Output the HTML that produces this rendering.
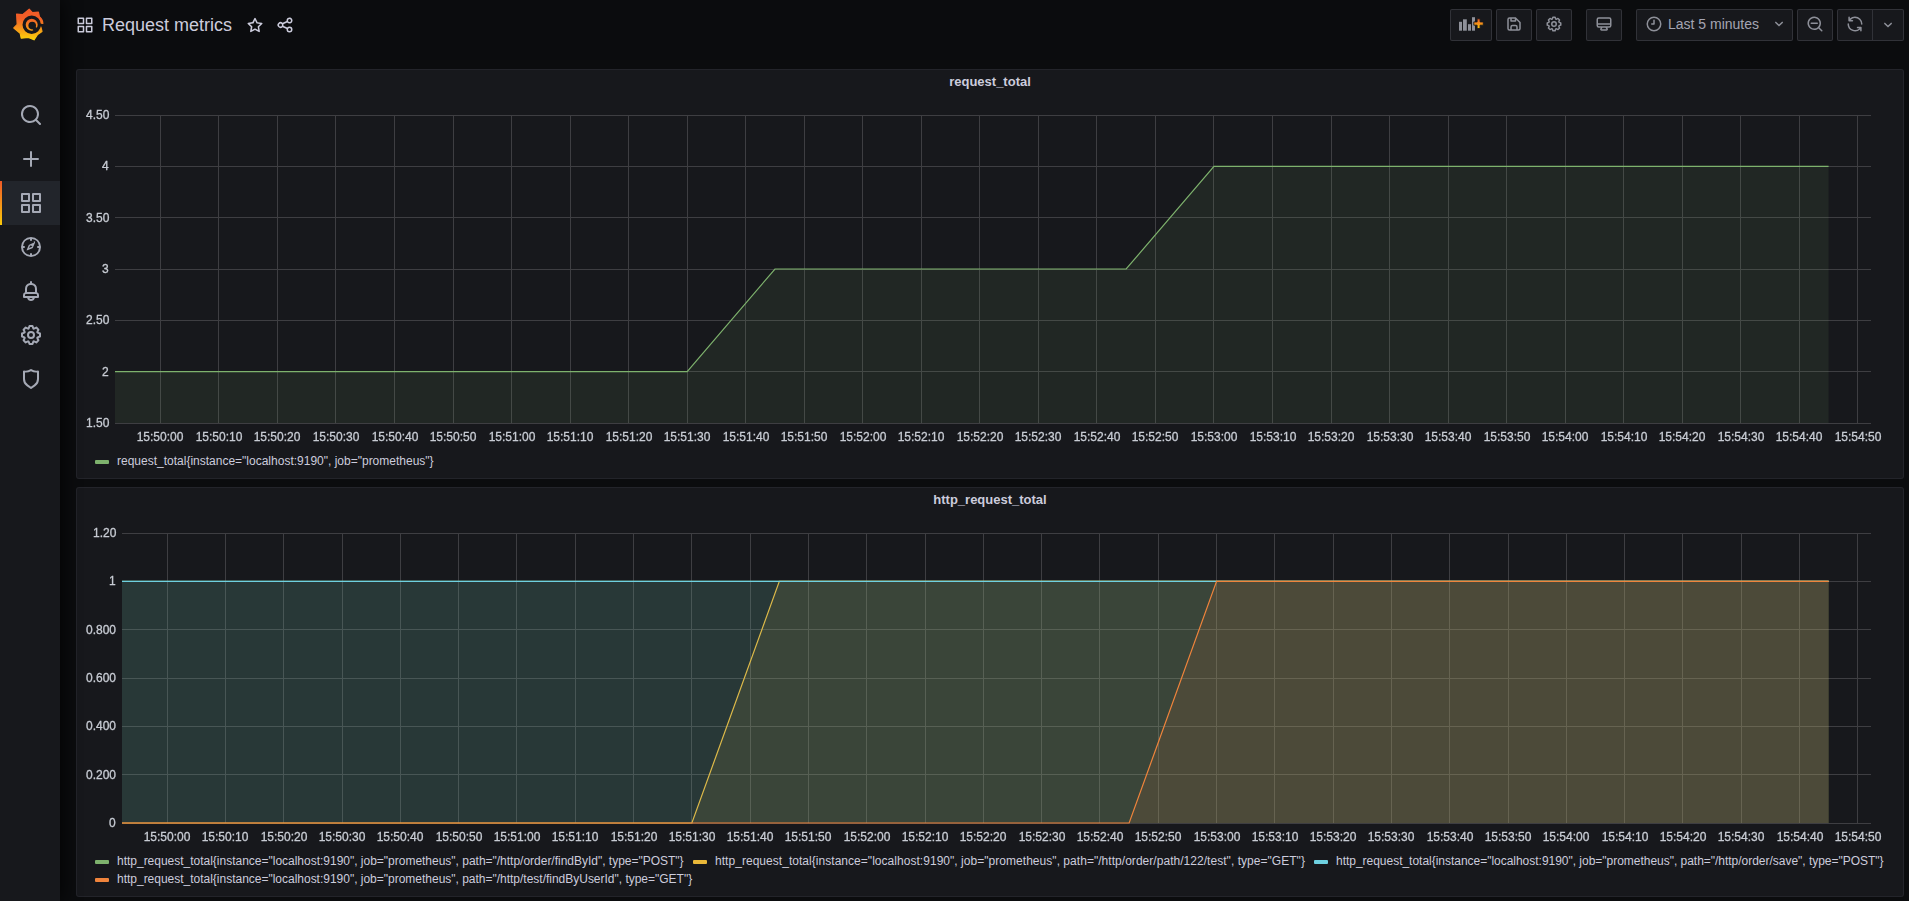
<!DOCTYPE html>
<html><head><meta charset="utf-8"><title>Request metrics - Grafana</title>
<style>
*{box-sizing:border-box;margin:0;padding:0}
html,body{width:1909px;height:901px;overflow:hidden;background:#0b0c0e;font-family:"Liberation Sans", sans-serif;color:#ccccdc}
.side{position:absolute;left:0;top:0;width:60px;height:901px;background:#17181c;box-shadow:0 0 20px rgba(0,0,0,0.9);z-index:5}
.active{position:absolute;left:0;top:181px;width:60px;height:44px;background:#22252b}
.abar{position:absolute;left:0;top:181px;width:2px;height:44px;background:linear-gradient(#f05a28,#fbca0a)}
.panel{position:absolute;left:76px;width:1828px;background:#17181c;border:1px solid rgba(204,204,220,0.07);border-radius:3px}
.yl{position:absolute;font-size:12px;line-height:14px;color:#c8ccd4;-webkit-text-stroke:0.3px #c8ccd4;will-change:transform;text-align:right;white-space:nowrap}
.xl{position:absolute;width:60px;text-align:center;font-size:12px;line-height:14px;color:#c8ccd4;-webkit-text-stroke:0.3px #c8ccd4;will-change:transform;white-space:nowrap}
.ptitle{position:absolute;left:76px;width:1828px;text-align:center;font-size:13px;font-weight:bold;line-height:16px;color:#ccccdc}
.sw{position:absolute;width:14px;height:4px;border-radius:1px}
.lt{position:absolute;font-size:12px;line-height:14px;color:#ccccdc;white-space:nowrap}
.btn{position:absolute;top:9px;height:32px;background:#17181c;border:1px solid rgba(204,204,220,0.15);border-radius:2px}
</style></head><body>
<div class="side">
<svg style="position:absolute;left:10px;top:6px" width="36" height="36" viewBox="0 0 36 36">
<defs><linearGradient id="lg" x1="0" y1="0" x2="0" y2="1"><stop offset="0" stop-color="#f05a28"/><stop offset="0.3" stop-color="#f25f27"/><stop offset="1" stop-color="#fbd20a"/></linearGradient></defs>
<path d="M19.2 3.2 L22.4 6.6 L28.4 6.2 L29.4 10.6 Q33 13.5 32.8 17.6 L30.4 19.2 L32 25.4 L27.6 28.4 L24 33.8 L18.4 31.4 L11.2 32.2 L10.2 27.4 L3.8 22 L7.2 18.4 L6.6 8.2 L12.6 8.6 Z" fill="url(#lg)" stroke="url(#lg)" stroke-width="1.2" stroke-linejoin="round"/>
<circle cx="21.7" cy="18.8" r="7.6" fill="none" stroke="#17181c" stroke-width="3.2"/>
<path d="M28.6 17.2 L33.8 18.2 L33.6 20.4 L28.4 20.6 Z" fill="#17181c"/>
<circle cx="22.2" cy="19.6" r="3.8" fill="#17181c"/>
<path d="M22.2 19.6 L28.4 22.4 L23.6 26.2 Z" fill="#17181c"/>
</svg>
<div class="active"></div><div class="abar"></div>
<svg style="position:absolute;left:19px;top:103px" width="24" height="24" viewBox="0 0 24 24"><path d="M21.71,20.29,18,16.61A9,9,0,1,0,16.61,18l3.68,3.68a1,1,0,0,0,1.42,0A1,1,0,0,0,21.71,20.29ZM11,18a7,7,0,1,1,7-7A7,7,0,0,1,11,18Z" fill="#a5a9b5"/></svg><svg style="position:absolute;left:19px;top:147px" width="24" height="24" viewBox="0 0 24 24"><path d="M19,11H13V5a1,1,0,0,0-2,0v6H5a1,1,0,0,0,0,2h6v6a1,1,0,0,0,2,0V13h6a1,1,0,0,0,0-2Z" fill="#a5a9b5"/></svg><svg style="position:absolute;left:19px;top:191px" width="24" height="24" viewBox="0 0 24 24"><path d="M10,13H3a1,1,0,0,0-1,1v7a1,1,0,0,0,1,1h7a1,1,0,0,0,1-1V14A1,1,0,0,0,10,13ZM9,20H4V15H9ZM21,2H14a1,1,0,0,0-1,1v7a1,1,0,0,0,1,1h7a1,1,0,0,0,1-1V3A1,1,0,0,0,21,2ZM20,9H15V4h5Zm1,4H14a1,1,0,0,0-1,1v7a1,1,0,0,0,1,1h7a1,1,0,0,0,1-1V14A1,1,0,0,0,21,13Zm-1,7H15V15h5ZM10,2H3A1,1,0,0,0,2,3v7a1,1,0,0,0,1,1h7a1,1,0,0,0,1-1V3A1,1,0,0,0,10,2ZM9,9H4V4H9Z" fill="#a5a9b5"/></svg><svg style="position:absolute;left:19px;top:235px" width="24" height="24" viewBox="0 0 24 24"><path d="M12,2A10,10,0,1,0,22,12,10,10,0,0,0,12,2Zm1,17.93V19a1,1,0,0,0-2,0v.93A8,8,0,0,1,4.07,13H5a1,1,0,0,0,0-2H4.07A8,8,0,0,1,11,4.07V5a1,1,0,0,0,2,0V4.07A8,8,0,0,1,19.93,11H19a1,1,0,0,0,0,2h.93A8,8,0,0,1,13,19.93ZM15.14,7.55l-5,2.12a1,1,0,0,0-.47.47l-2.12,5A1,1,0,0,0,7.55,15a1,1,0,0,0,.3.2,1,1,0,0,0,.55.05l5-2.12a1,1,0,0,0,.47-.47l2.12-5a1,1,0,0,0-1.3-1.3ZM12.55,12,10.07,13l1-2.48L13.45,11Z" fill="#a5a9b5"/></svg><svg style="position:absolute;left:19px;top:279px" width="24" height="24" viewBox="0 0 24 24"><path d="M18,13.18V10a6,6,0,0,0-5-5.91V3a1,1,0,0,0-2,0V4.09A6,6,0,0,0,6,10v3.18A3,3,0,0,0,4,16v2a1,1,0,0,0,1,1H8.14a4,4,0,0,0,7.72,0H19a1,1,0,0,0,1-1V16A3,3,0,0,0,18,13.18ZM8,10a4,4,0,0,1,8,0v3H8ZM12,20a2,2,0,0,1-1.72-1h3.44A2,2,0,0,1,12,20Zm6-3H6V16a1,1,0,0,1,1-1H17a1,1,0,0,1,1,1Z" fill="#a5a9b5"/></svg><svg style="position:absolute;left:19px;top:323px" width="24" height="24" viewBox="0 0 24 24"><path d="M21.32,9.55l-1.89-.63.89-1.78A1,1,0,0,0,20.130,6L18,3.87a1,1,0,0,0-1.15-.19l-1.78.89-.63-1.89A1,1,0,0,0,13.5,2h-3a1,1,0,0,0-.95.68L8.92,4.57,7.14,3.68A1,1,0,0,0,6,3.870L3.87,6a1,1,0,0,0-.19,1.15l.89,1.78-1.89.63A1,1,0,0,0,2,10.5v3a1,1,0,0,0,.68.95l1.89.63-.89,1.78A1,1,0,0,0,3.87,18L6,20.13a1,1,0,0,0,1.15.19l1.78-.89.63,1.89a1,1,0,0,0,.95.68h3a1,1,0,0,0,.95-.68l.63-1.89,1.78.89A1,1,0,0,0,18,20.13L20.13,18a1,1,0,0,0,.19-1.15l-.89-1.78,1.89-.63A1,1,0,0,0,22,13.5v-3A1,1,0,0,0,21.32,9.55ZM20,12.78l-1.2.4A2,2,0,0,0,17.64,16l.57,1.14-1.1,1.1L16,17.64a2,2,0,0,0-2.79,1.16L12.78,20H11.22l-.4-1.2A2,2,0,0,0,8,17.64l-1.14.57-1.1-1.1L6.36,16A2,2,0,0,0,5.2,13.18L4,12.78V11.22l1.2-.4A2,2,0,0,0,6.36,8L5.79,6.89l1.1-1.1L8,6.36A2,2,0,0,0,10.82,5.2L11.22,4h1.56l.4,1.2A2,2,0,0,0,16,6.36l1.14-.57,1.1,1.1L17.64,8a2,2,0,0,0,1.16,2.79l1.2.4ZM12,8a4,4,0,1,0,4,4A4,4,0,0,0,12,8Zm0,6a2,2,0,1,1,2-2A2,2,0,0,1,12,14Z" fill="#a5a9b5"/></svg><svg style="position:absolute;left:19px;top:367px" width="24" height="24" viewBox="0 0 24 24"><path d="M19.63,3.65a1,1,0,0,0-.84-.2,8,8,0,0,1-6.22-1.27,1,1,0,0,0-1.14,0A8,8,0,0,1,5.21,3.45a1,1,0,0,0-.84.2A1,1,0,0,0,4,4.43v7.45a9,9,0,0,0,3.77,7.33l3.65,2.6a1,1,0,0,0,1.16,0l3.650-2.6A9,9,0,0,0,20,11.88V4.43A1,1,0,0,0,19.63,3.65ZM18,11.88a7,7,0,0,1-2.93,5.7L12,19.77,8.930,17.58A7,7,0,0,1,6,11.88V5.58a10,10,0,0,0,6-1.39,10,10,0,0,0,6,1.39Z" fill="#a5a9b5"/></svg>
</div>
<svg style="position:absolute;left:75.5px;top:16px" width="18" height="18" viewBox="0 0 24 24"><path d="M10,13H3a1,1,0,0,0-1,1v7a1,1,0,0,0,1,1h7a1,1,0,0,0,1-1V14A1,1,0,0,0,10,13ZM9,20H4V15H9ZM21,2H14a1,1,0,0,0-1,1v7a1,1,0,0,0,1,1h7a1,1,0,0,0,1-1V3A1,1,0,0,0,21,2ZM20,9H15V4h5Zm1,4H14a1,1,0,0,0-1,1v7a1,1,0,0,0,1,1h7a1,1,0,0,0,1-1V14A1,1,0,0,0,21,13Zm-1,7H15V15h5ZM10,2H3A1,1,0,0,0,2,3v7a1,1,0,0,0,1,1h7a1,1,0,0,0,1-1V3A1,1,0,0,0,10,2ZM9,9H4V4H9Z" fill="#ccccdc"/></svg><div style="position:absolute;left:102px;top:15px;font-size:18px;line-height:21px;color:#ccccdc;white-space:nowrap">Request metrics</div><svg style="position:absolute;left:246px;top:16px" width="18" height="18" viewBox="0 0 24 24"><path d="M22,9.67A1,1,0,0,0,21.14,9l-5.69-.83L12.9,3a1,1,0,0,0-1.8,0L8.55,8.16,2.86,9a1,1,0,0,0-.81.68,1,1,0,0,0,.25,1l4.13,4-1,5.68A1,1,0,0,0,6.9,21.440L12,18.77l5.1,2.67a.93.93,0,0,0,.46.12,1,1,0,0,0,.59-.19,1,1,0,0,0,.4-1l-1-5.68,4.13-4A1,1,0,0,0,22,9.67Zm-6.15,4a1,1,0,0,0-.29.88l.72,4.2-3.76-2a1.06,1.06,0,0,0-.94,0l-3.76,2,.72-4.2a1,1,0,0,0-.29-.88l-3-3,4.21-.61a1,1,0,0,0,.76-.55L12,5.7l1.88,3.82a1,1,0,0,0,.76.55l4.21.61Z" fill="#ccccdc"/></svg><svg style="position:absolute;left:275.5px;top:15.5px" width="18" height="18" viewBox="0 0 24 24"><path d="M18,14a4,4,0,0,0-3.08,1.48l-5.1-2.35a3.64,3.64,0,0,0,0-2.26l5.1-2.35A4,4,0,1,0,14,6a4.17,4.17,0,0,0,.07.71L8.79,9.14a4,4,0,1,0,0,5.72l5.28,2.43A4.170,4.170,0,0,0,14,18a4,4,0,1,0,4-4ZM18,4a2,2,0,1,1-2,2A2,2,0,0,1,18,4ZM6,14a2,2,0,1,1,2-2A2,2,0,0,1,6,14Zm12,6a2,2,0,1,1,2-2A2,2,0,0,1,18,20Z" fill="#ccccdc"/></svg>
<div class="btn" style="left:1450px;width:42px"></div><svg style="position:absolute;left:1458px;top:16px" width="26" height="16" viewBox="0 0 26 16"><g fill="#8e9099"><rect x="1" y="5.8" width="3" height="8.9"/><rect x="5" y="3.3" width="3.8" height="11.4"/><rect x="10" y="8.2" width="3" height="6.5"/><rect x="14" y="1.2" width="3" height="13.5"/></g><defs><linearGradient id="pg" x1="0" y1="0" x2="0" y2="1"><stop offset="0" stop-color="#f05a28"/><stop offset="1" stop-color="#fbca0a"/></linearGradient></defs><path d="M19.1 2.8 h3 v3.1 h3.2 v3.3 h-3.2 v3.4 h-3 v-3.4 h-3.3 v-3.3 h3.3 z" fill="url(#pg)" stroke="#17181c" stroke-width="0.9"/></svg><div class="btn" style="left:1496px;width:36px"></div><svg style="position:absolute;left:1504.75px;top:14.75px" width="18" height="18" viewBox="0 0 24 24"><path d="M20.71,9.29l-6-6a1,1,0,0,0-.32-.21A1.09,1.09,0,0,0,14,3H6A3,3,0,0,0,3,6V18a3,3,0,0,0,3,3H18a3,3,0,0,0,3-3V10A1,1,0,0,0,20.71,9.29ZM9,5h4V7H9Zm6,14H9V16a1,1,0,0,1,1-1h4a1,1,0,0,1,1,1Zm4-1a1,1,0,0,1-1,1H17V16a3,3,0,0,0-3-3H10a3,3,0,0,0-3,3v3H6a1,1,0,0,1-1-1V6A1,1,0,0,1,6,5H7V8A1,1,0,0,0,8,9h6a1,1,0,0,0,1-1V6.41l4,4Z" fill="#8e9099"/></svg><div class="btn" style="left:1536px;width:36px"></div><svg style="position:absolute;left:1545px;top:15px" width="18" height="18" viewBox="0 0 24 24"><path d="M21.32,9.55l-1.89-.63.89-1.78A1,1,0,0,0,20.130,6L18,3.87a1,1,0,0,0-1.15-.19l-1.78.89-.63-1.89A1,1,0,0,0,13.5,2h-3a1,1,0,0,0-.95.68L8.92,4.57,7.14,3.68A1,1,0,0,0,6,3.870L3.87,6a1,1,0,0,0-.19,1.15l.89,1.78-1.89.63A1,1,0,0,0,2,10.5v3a1,1,0,0,0,.68.95l1.89.63-.89,1.78A1,1,0,0,0,3.87,18L6,20.13a1,1,0,0,0,1.15.19l1.78-.89.63,1.89a1,1,0,0,0,.95.68h3a1,1,0,0,0,.95-.68l.63-1.89,1.78.89A1,1,0,0,0,18,20.13L20.13,18a1,1,0,0,0,.19-1.15l-.89-1.78,1.89-.63A1,1,0,0,0,22,13.5v-3A1,1,0,0,0,21.32,9.55ZM20,12.78l-1.2.4A2,2,0,0,0,17.64,16l.57,1.14-1.1,1.1L16,17.64a2,2,0,0,0-2.79,1.16L12.78,20H11.22l-.4-1.2A2,2,0,0,0,8,17.64l-1.14.57-1.1-1.1L6.36,16A2,2,0,0,0,5.2,13.18L4,12.78V11.22l1.2-.4A2,2,0,0,0,6.36,8L5.79,6.89l1.1-1.1L8,6.36A2,2,0,0,0,10.82,5.2L11.22,4h1.56l.4,1.2A2,2,0,0,0,16,6.36l1.14-.57,1.1,1.1L17.64,8a2,2,0,0,0,1.16,2.79l1.2.4ZM12,8a4,4,0,1,0,4,4A4,4,0,0,0,12,8Zm0,6a2,2,0,1,1,2-2A2,2,0,0,1,12,14Z" fill="#8e9099"/></svg><div class="btn" style="left:1586px;width:36px"></div><svg style="position:absolute;left:1595px;top:15px" width="18" height="18" viewBox="0 0 24 24"><path d="M19,3H5A3,3,0,0,0,2,6v8a3,3,0,0,0,3,3H7.64l-.58,1a2,2,0,0,0,0,2,2,2,0,0,0,1.75,1h6.46A2,2,0,0,0,17,20a2,2,0,0,0,0-2l-.59-1H19a3,3,0,0,0,3-3V6A3,3,0,0,0,19,3ZM8.77,19,10,17H14l1.2,2ZM20,14a1,1,0,0,1-1,1H5a1,1,0,0,1-1-1V13H20Zm0-3H4V6A1,1,0,0,1,5,5H19a1,1,0,0,1,1,1Z" fill="#8e9099"/></svg><div class="btn" style="left:1636px;width:157px"></div><svg style="position:absolute;left:1644.75px;top:15px" width="18" height="18" viewBox="0 0 24 24"><path d="M12,2A10,10,0,1,0,22,12,10,10,0,0,0,12,2Zm0,18a8,8,0,1,1,8-8A8,8,0,0,1,12,20Zm0-14a1,1,0,0,0-1,1v4H9a1,1,0,0,0,0,2h3a1,1,0,0,0,1-1V7A1,1,0,0,0,12,6Z" fill="#8e9099"/></svg><div style="position:absolute;left:1668px;top:16px;font-size:14px;line-height:17px;color:#ccccdc;opacity:0.78;white-space:nowrap">Last 5 minutes</div><svg style="position:absolute;left:1770px;top:15px" width="18" height="18" viewBox="0 0 24 24"><path d="M17,9.17a1,1,0,0,0-1.41,0L12,12.71,8.46,9.17a1,1,0,0,0-1.41,0,1,1,0,0,0,0,1.42l4.24,4.24a1,1,0,0,0,1.42,0L17,10.59A1,1,0,0,0,17,9.17Z" fill="#8e9099"/></svg><div class="btn" style="left:1797px;width:36px"></div><svg style="position:absolute;left:1806px;top:15px" width="18" height="18" viewBox="0 0 24 24"><path d="M21.71,20.29,18,16.61A9,9,0,1,0,16.61,18l3.68,3.68a1,1,0,0,0,1.42,0A1,1,0,0,0,21.71,20.29ZM11,18a7,7,0,1,1,7-7A7,7,0,0,1,11,18Zm4-8H7a1,1,0,0,0,0,2h8a1,1,0,0,0,0-2Z" fill="#8e9099"/></svg><div class="btn" style="left:1837px;width:67px"></div><div style="position:absolute;left:1872px;top:10px;width:1px;height:30px;background:rgba(204,204,220,0.15)"></div><svg style="position:absolute;left:1846px;top:15px" width="18" height="18" viewBox="0 0 24 24"><path d="M19.91,15.51H15.38a1,1,0,0,0,0,2h2.4A8,8,0,0,1,4,12a1,1,0,0,0-2,0,10,10,0,0,0,16.88,7.23V21a1,1,0,0,0,2,0V16.5A1,1,0,0,0,19.91,15.51ZM12,2A10,10,0,0,0,5.12,4.770V3a1,1,0,0,0-2,0V7.5a1,1,0,0,0,1,1h4.5a1,1,0,0,0,0-2H6.22A8,8,0,0,1,20,12a1,1,0,0,0,2,0A10,10,0,0,0,12,2Z" fill="#8e9099"/></svg><svg style="position:absolute;left:1879px;top:15.5px" width="18" height="18" viewBox="0 0 24 24"><path d="M17,9.17a1,1,0,0,0-1.41,0L12,12.71,8.46,9.17a1,1,0,0,0-1.41,0,1,1,0,0,0,0,1.42l4.24,4.24a1,1,0,0,0,1.42,0L17,10.59A1,1,0,0,0,17,9.17Z" fill="#8e9099"/></svg>
<div class="panel" style="top:69px;height:410px"></div>
<div class="panel" style="top:487px;height:410px"></div>
<svg style="position:absolute;left:0;top:0" width="1909" height="901">
<defs><clipPath id="c69"><rect x="115" y="114" width="1756" height="310"/></clipPath></defs>
<path d="M115 115.5 H1871 M115 166.5 H1871 M115 217.5 H1871 M115 269.5 H1871 M115 320.5 H1871 M115 371.5 H1871 M115 423.5 H1871 M160.5 115 V423 M218.5 115 V423 M277.5 115 V423 M335.5 115 V423 M394.5 115 V423 M453.5 115 V423 M511.5 115 V423 M570.5 115 V423 M628.5 115 V423 M687.5 115 V423 M745.5 115 V423 M804.5 115 V423 M862.5 115 V423 M921.5 115 V423 M979.5 115 V423 M1038.5 115 V423 M1096.5 115 V423 M1155.5 115 V423 M1213.5 115 V423 M1272.5 115 V423 M1331.5 115 V423 M1389.5 115 V423 M1448.5 115 V423 M1506.5 115 V423 M1565.5 115 V423 M1623.5 115 V423 M1682.5 115 V423 M1740.5 115 V423 M1799.5 115 V423 M1857.5 115 V423" stroke="rgba(255,255,255,0.17)" stroke-width="1" fill="none" shape-rendering="crispEdges"/>
<g clip-path="url(#c69)">
<path d="M72.56 423 L72.56 371.67 L160.36 371.67 L248.16 371.67 L335.96 371.67 L423.76 371.67 L511.56 371.67 L599.36 371.67 L687.16 371.67 L774.96 269 L862.76 269 L950.56 269 L1038.36 269 L1126.16 269 L1213.96 166.33 L1301.76 166.33 L1389.56 166.33 L1477.36 166.33 L1565.16 166.33 L1652.96 166.33 L1740.76 166.33 L1828.56 166.33 L1828.56 423 Z" fill="#7EB26D" fill-opacity="0.1" stroke="none"/>
<path d="M72.56 371.67 L160.36 371.67 L248.16 371.67 L335.96 371.67 L423.76 371.67 L511.56 371.67 L599.36 371.67 L687.16 371.67 L774.96 269 L862.76 269 L950.56 269 L1038.36 269 L1126.16 269 L1213.96 166.33 L1301.76 166.33 L1389.56 166.33 L1477.36 166.33 L1565.16 166.33 L1652.96 166.33 L1740.76 166.33 L1828.56 166.33" fill="none" stroke="#7EB26D" stroke-width="1.2"/>
</g></svg>
<div class="ptitle" style="top:74px">request_total</div>
<div class="sw" style="left:95px;top:460px;background:#7EB26D"></div>
<div class="lt" style="left:117px;top:454px;letter-spacing:0px">request_total{instance="localhost:9190", job="prometheus"}</div>
<svg style="position:absolute;left:0;top:0" width="1909" height="901">
<defs><clipPath id="c487"><rect x="122" y="532" width="1749" height="292"/></clipPath></defs>
<path d="M122 533.5 H1871 M122 581.5 H1871 M122 629.5 H1871 M122 678.5 H1871 M122 726.5 H1871 M122 774.5 H1871 M122 823.5 H1871 M167.5 533 V823 M225.5 533 V823 M283.5 533 V823 M342.5 533 V823 M400.5 533 V823 M458.5 533 V823 M516.5 533 V823 M575.5 533 V823 M633.5 533 V823 M691.5 533 V823 M750.5 533 V823 M808.5 533 V823 M866.5 533 V823 M925.5 533 V823 M983.5 533 V823 M1041.5 533 V823 M1099.5 533 V823 M1158.5 533 V823 M1216.5 533 V823 M1274.5 533 V823 M1333.5 533 V823 M1391.5 533 V823 M1449.5 533 V823 M1508.5 533 V823 M1566.5 533 V823 M1624.5 533 V823 M1682.5 533 V823 M1741.5 533 V823 M1799.5 533 V823 M1857.5 533 V823" stroke="rgba(255,255,255,0.17)" stroke-width="1" fill="none" shape-rendering="crispEdges"/>
<g clip-path="url(#c487)">
<path d="M79.73 823 L79.73 581.33 L167.18 581.33 L254.63 581.33 L342.08 581.33 L429.53 581.33 L516.98 581.33 L604.43 581.33 L691.88 581.33 L779.33 581.33 L866.78 581.33 L954.23 581.33 L1041.68 581.33 L1129.13 581.33 L1216.58 581.33 L1304.03 581.33 L1391.48 581.33 L1478.93 581.33 L1566.38 581.33 L1653.83 581.33 L1741.28 581.33 L1828.73 581.33 L1828.73 823 Z" fill="#7EB26D" fill-opacity="0.1" stroke="none"/>
<path d="M79.73 581.33 L167.18 581.33 L254.63 581.33 L342.08 581.33 L429.53 581.33 L516.98 581.33 L604.43 581.33 L691.88 581.33 L779.33 581.33 L866.78 581.33 L954.23 581.33 L1041.68 581.33 L1129.13 581.33 L1216.58 581.33 L1304.03 581.33 L1391.48 581.33 L1478.93 581.33 L1566.38 581.33 L1653.83 581.33 L1741.28 581.33 L1828.73 581.33" fill="none" stroke="#7EB26D" stroke-width="1.2"/>
<path d="M79.73 823 L79.73 823 L167.18 823 L254.63 823 L342.08 823 L429.53 823 L516.98 823 L604.43 823 L691.88 823 L779.33 581.33 L866.78 581.33 L954.23 581.33 L1041.68 581.33 L1129.13 581.33 L1216.58 581.33 L1304.03 581.33 L1391.48 581.33 L1478.93 581.33 L1566.38 581.33 L1653.83 581.33 L1741.28 581.33 L1828.73 581.33 L1828.73 823 Z" fill="#EAB839" fill-opacity="0.1" stroke="none"/>
<path d="M79.73 823 L167.18 823 L254.63 823 L342.08 823 L429.53 823 L516.98 823 L604.43 823 L691.88 823 L779.33 581.33 L866.78 581.33 L954.23 581.33 L1041.68 581.33 L1129.13 581.33 L1216.58 581.33 L1304.03 581.33 L1391.48 581.33 L1478.93 581.33 L1566.38 581.33 L1653.83 581.33 L1741.28 581.33 L1828.73 581.33" fill="none" stroke="#EAB839" stroke-width="1.2"/>
<path d="M79.73 823 L79.73 581.33 L167.18 581.33 L254.63 581.33 L342.08 581.33 L429.53 581.33 L516.98 581.33 L604.43 581.33 L691.88 581.33 L779.33 581.33 L866.78 581.33 L954.23 581.33 L1041.68 581.33 L1129.13 581.33 L1216.58 581.33 L1304.03 581.33 L1391.48 581.33 L1478.93 581.33 L1566.38 581.33 L1653.83 581.33 L1741.28 581.33 L1828.73 581.33 L1828.73 823 Z" fill="#6ED0E0" fill-opacity="0.1" stroke="none"/>
<path d="M79.73 581.33 L167.18 581.33 L254.63 581.33 L342.08 581.33 L429.53 581.33 L516.98 581.33 L604.43 581.33 L691.88 581.33 L779.33 581.33 L866.78 581.33 L954.23 581.33 L1041.68 581.33 L1129.13 581.33 L1216.58 581.33 L1304.03 581.33 L1391.48 581.33 L1478.93 581.33 L1566.38 581.33 L1653.83 581.33 L1741.28 581.33 L1828.73 581.33" fill="none" stroke="#6ED0E0" stroke-width="1.2"/>
<path d="M79.73 823 L79.73 823 L167.18 823 L254.63 823 L342.08 823 L429.53 823 L516.98 823 L604.43 823 L691.88 823 L779.33 823 L866.78 823 L954.23 823 L1041.68 823 L1129.13 823 L1216.58 581.33 L1304.03 581.33 L1391.48 581.33 L1478.93 581.33 L1566.38 581.33 L1653.83 581.33 L1741.28 581.33 L1828.73 581.33 L1828.73 823 Z" fill="#EF843C" fill-opacity="0.1" stroke="none"/>
<path d="M79.73 823 L167.18 823 L254.63 823 L342.08 823 L429.53 823 L516.98 823 L604.43 823 L691.88 823 L779.33 823 L866.78 823 L954.23 823 L1041.68 823 L1129.13 823 L1216.58 581.33 L1304.03 581.33 L1391.48 581.33 L1478.93 581.33 L1566.38 581.33 L1653.83 581.33 L1741.28 581.33 L1828.73 581.33" fill="none" stroke="#EF843C" stroke-width="1.2"/>
</g></svg>
<div class="ptitle" style="top:492px">http_request_total</div>
<div class="sw" style="left:95px;top:860px;background:#7EB26D"></div>
<div class="lt" style="left:117px;top:854px;letter-spacing:-0.011px">http_request_total{instance="localhost:9190", job="prometheus", path="/http/order/findById", type="POST"}</div>
<div class="sw" style="left:693px;top:860px;background:#EAB839"></div>
<div class="lt" style="left:715px;top:854px;letter-spacing:0.038px">http_request_total{instance="localhost:9190", job="prometheus", path="/http/order/path/122/test", type="GET"}</div>
<div class="sw" style="left:1314px;top:860px;background:#6ED0E0"></div>
<div class="lt" style="left:1336px;top:854px;letter-spacing:-0.022px">http_request_total{instance="localhost:9190", job="prometheus", path="/http/order/save", type="POST"}</div>
<div class="sw" style="left:95px;top:878px;background:#EF843C"></div>
<div class="lt" style="left:117px;top:872px;letter-spacing:-0.012px">http_request_total{instance="localhost:9190", job="prometheus", path="/http/test/findByUserId", type="GET"}</div>
<div class="yl" style="top:108px;right:1800px">4.50</div>
<div class="yl" style="top:159.33px;right:1800px">4</div>
<div class="yl" style="top:210.67px;right:1800px">3.50</div>
<div class="yl" style="top:262px;right:1800px">3</div>
<div class="yl" style="top:313.33px;right:1800px">2.50</div>
<div class="yl" style="top:364.67px;right:1800px">2</div>
<div class="yl" style="top:416px;right:1800px">1.50</div>
<div class="xl" style="left:130.36px;top:430px">15:50:00</div>
<div class="xl" style="left:188.9px;top:430px">15:50:10</div>
<div class="xl" style="left:247.43px;top:430px">15:50:20</div>
<div class="xl" style="left:305.96px;top:430px">15:50:30</div>
<div class="xl" style="left:364.5px;top:430px">15:50:40</div>
<div class="xl" style="left:423.03px;top:430px">15:50:50</div>
<div class="xl" style="left:481.56px;top:430px">15:51:00</div>
<div class="xl" style="left:540.1px;top:430px">15:51:10</div>
<div class="xl" style="left:598.63px;top:430px">15:51:20</div>
<div class="xl" style="left:657.16px;top:430px">15:51:30</div>
<div class="xl" style="left:715.7px;top:430px">15:51:40</div>
<div class="xl" style="left:774.23px;top:430px">15:51:50</div>
<div class="xl" style="left:832.76px;top:430px">15:52:00</div>
<div class="xl" style="left:891.3px;top:430px">15:52:10</div>
<div class="xl" style="left:949.83px;top:430px">15:52:20</div>
<div class="xl" style="left:1008.36px;top:430px">15:52:30</div>
<div class="xl" style="left:1066.9px;top:430px">15:52:40</div>
<div class="xl" style="left:1125.43px;top:430px">15:52:50</div>
<div class="xl" style="left:1183.96px;top:430px">15:53:00</div>
<div class="xl" style="left:1242.5px;top:430px">15:53:10</div>
<div class="xl" style="left:1301.03px;top:430px">15:53:20</div>
<div class="xl" style="left:1359.56px;top:430px">15:53:30</div>
<div class="xl" style="left:1418.1px;top:430px">15:53:40</div>
<div class="xl" style="left:1476.63px;top:430px">15:53:50</div>
<div class="xl" style="left:1535.16px;top:430px">15:54:00</div>
<div class="xl" style="left:1593.7px;top:430px">15:54:10</div>
<div class="xl" style="left:1652.23px;top:430px">15:54:20</div>
<div class="xl" style="left:1710.76px;top:430px">15:54:30</div>
<div class="xl" style="left:1769.3px;top:430px">15:54:40</div>
<div class="xl" style="left:1827.83px;top:430px">15:54:50</div>
<div class="yl" style="top:526px;right:1793px">1.20</div>
<div class="yl" style="top:574.33px;right:1793px">1</div>
<div class="yl" style="top:622.67px;right:1793px">0.800</div>
<div class="yl" style="top:671px;right:1793px">0.600</div>
<div class="yl" style="top:719.33px;right:1793px">0.400</div>
<div class="yl" style="top:767.67px;right:1793px">0.200</div>
<div class="yl" style="top:816px;right:1793px">0</div>
<div class="xl" style="left:137.18px;top:830px">15:50:00</div>
<div class="xl" style="left:195.48px;top:830px">15:50:10</div>
<div class="xl" style="left:253.78px;top:830px">15:50:20</div>
<div class="xl" style="left:312.08px;top:830px">15:50:30</div>
<div class="xl" style="left:370.38px;top:830px">15:50:40</div>
<div class="xl" style="left:428.68px;top:830px">15:50:50</div>
<div class="xl" style="left:486.98px;top:830px">15:51:00</div>
<div class="xl" style="left:545.28px;top:830px">15:51:10</div>
<div class="xl" style="left:603.58px;top:830px">15:51:20</div>
<div class="xl" style="left:661.88px;top:830px">15:51:30</div>
<div class="xl" style="left:720.18px;top:830px">15:51:40</div>
<div class="xl" style="left:778.48px;top:830px">15:51:50</div>
<div class="xl" style="left:836.78px;top:830px">15:52:00</div>
<div class="xl" style="left:895.08px;top:830px">15:52:10</div>
<div class="xl" style="left:953.38px;top:830px">15:52:20</div>
<div class="xl" style="left:1011.68px;top:830px">15:52:30</div>
<div class="xl" style="left:1069.98px;top:830px">15:52:40</div>
<div class="xl" style="left:1128.28px;top:830px">15:52:50</div>
<div class="xl" style="left:1186.58px;top:830px">15:53:00</div>
<div class="xl" style="left:1244.88px;top:830px">15:53:10</div>
<div class="xl" style="left:1303.18px;top:830px">15:53:20</div>
<div class="xl" style="left:1361.48px;top:830px">15:53:30</div>
<div class="xl" style="left:1419.78px;top:830px">15:53:40</div>
<div class="xl" style="left:1478.08px;top:830px">15:53:50</div>
<div class="xl" style="left:1536.38px;top:830px">15:54:00</div>
<div class="xl" style="left:1594.68px;top:830px">15:54:10</div>
<div class="xl" style="left:1652.98px;top:830px">15:54:20</div>
<div class="xl" style="left:1711.28px;top:830px">15:54:30</div>
<div class="xl" style="left:1769.58px;top:830px">15:54:40</div>
<div class="xl" style="left:1827.88px;top:830px">15:54:50</div>
</body></html>
